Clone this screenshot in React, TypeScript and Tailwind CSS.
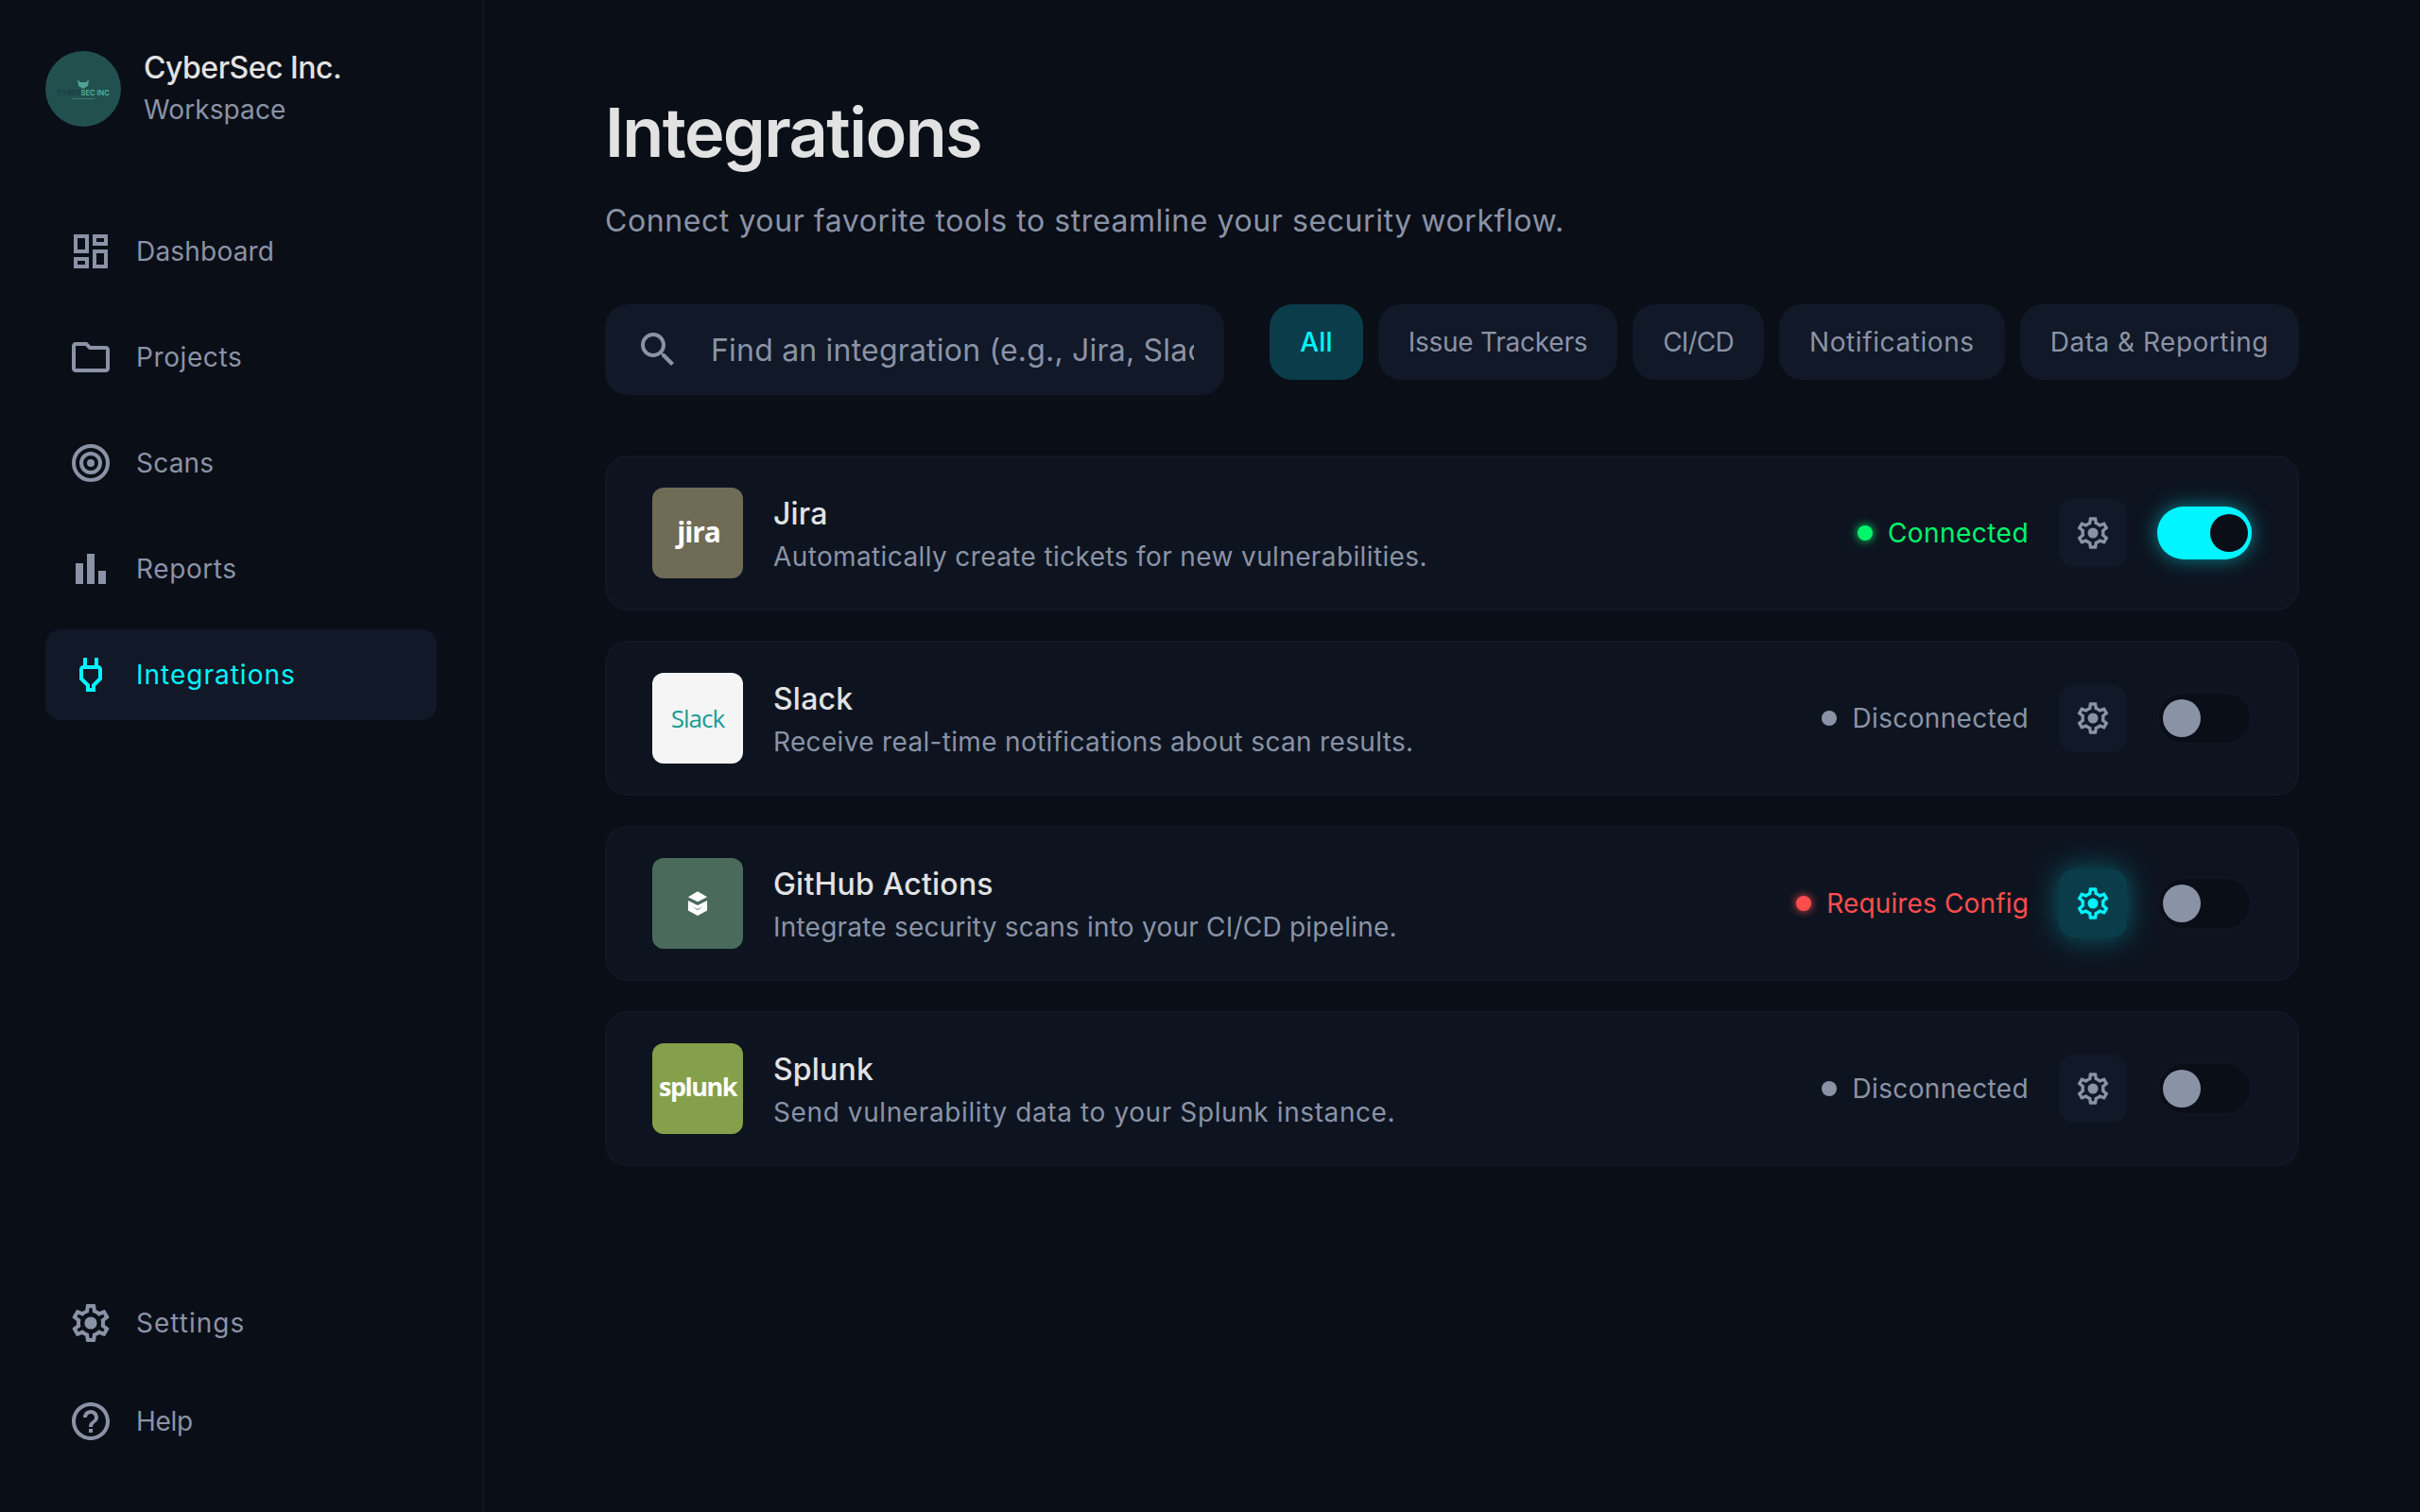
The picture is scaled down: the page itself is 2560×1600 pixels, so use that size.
import React from "react";

const gearOuter =
  "M19.43 12.98c.04-.32.07-.64.07-.98 0-.34-.03-.66-.07-.98l2.11-1.65c.19-.15.24-.42.12-.64l-2-3.46c-.09-.16-.26-.25-.44-.25-.06 0-.12.01-.17.03l-2.49 1c-.52-.4-1.08-.73-1.69-.98l-.38-2.65C14.46 2.18 14.25 2 14 2h-4c-.25 0-.46.18-.49.42l-.38 2.65c-.61.25-1.17.59-1.69.98l-2.49-1c-.06-.02-.12-.03-.18-.03-.17 0-.34.09-.43.25l-2 3.46c-.13.22-.07.49.12.64l2.11 1.65c-.04.32-.07.65-.07.98 0 .33.03.66.07.98l-2.11 1.65c-.19.15-.24.42-.12.64l2 3.46c.09.16.26.25.44.25.06 0 .12-.01.17-.03l2.49-1c.52.4 1.08.73 1.69.98l.38 2.65c.03.24.24.42.49.42h4c.25 0 .46-.18.49-.42l.38-2.65c.61-.25 1.17-.59 1.69-.98l2.49 1c.06.02.12.03.18.03.17 0 .34-.09.43-.25l2-3.46c.12-.22.07-.49-.12-.64l-2.11-1.65zm-1.98-1.71c.04.31.05.52.05.73 0 .21-.02.43-.05.73l-.14 1.13.89.7 1.08.84-.7 1.21-1.27-.51-1.04-.42-.9.68c-.43.32-.84.56-1.25.73l-1.06.43-.16 1.13-.2 1.35h-1.4l-.19-1.35-.16-1.13-1.06-.43c-.43-.18-.83-.41-1.23-.71l-.91-.7-1.06.43-1.27.51-.7-1.21 1.08-.84.89-.7-.14-1.13c-.03-.31-.05-.54-.05-.74s.02-.43.05-.73l.14-1.13-.89-.7-1.08-.84.7-1.21 1.27.51 1.04.42.9-.68c.43-.32.84-.56 1.25-.73l1.06-.43.16-1.13.2-1.35h1.39l.19 1.35.16 1.13 1.06.43c.43.18.83.41 1.23.71l.91.7 1.06-.43 1.27-.51.7 1.21-1.07.85-.89.7.14 1.13z";

function Icon({ d, size = 48, children }: { d?: string; size?: number; children?: React.ReactNode }) {
  return (
    <svg width={size} height={size} viewBox="0 0 24 24" fill="currentColor" className="shrink-0">
      {d && <path d={d} />}
      {children}
    </svg>
  );
}

function Gear({ size = 48 }: { size?: number }) {
  return (
    <Icon d={gearOuter} size={size}>
      <circle cx="12" cy="12" r="3.3" />
    </Icon>
  );
}

const navItems = [
  {
    label: "Dashboard",
    tracking: "tracking-[0.2px]",
    icon: <Icon d="M19 5v2h-4V5h4M9 5v6H5V5h4m10 8v6h-4v-6h4M9 17v2H5v-2h4M21 3h-8v6h8V3zM11 3H3v10h8V3zm10 8h-8v10h8V11zm-10 4H3v6h8v-6z" />,
  },
  {
    label: "Projects",
    tracking: "tracking-[0.6px]",
    icon: <Icon d="M9.17 6l2 2H20v10H4V6h5.17M10 4H4c-1.1 0-1.99.9-1.99 2L2 18c0 1.1.9 2 2 2h16c1.1 0 2-.9 2-2V8c0-1.1-.9-2-2-2h-8l-2-2z" />,
  },
  {
    label: "Scans",
    tracking: "tracking-[0.2px]",
    icon: (
      <Icon>
        <circle cx="12" cy="12" r="9" fill="none" stroke="currentColor" strokeWidth="2" />
        <circle cx="12" cy="12" r="5" fill="none" stroke="currentColor" strokeWidth="2" />
        <circle cx="12" cy="12" r="2" />
      </Icon>
    ),
  },
  { label: "Reports", tracking: "tracking-[0.6px]", icon: <Icon d="M4 9h4v11H4zM16 13h4v7h-4zM10 4h4v16h-4z" /> },
  {
    label: "Integrations",
    tracking: "tracking-[1px]",
    active: true,
    icon: <Icon d="M16.01 7 16 3h-2v4h-4V3H8v4h-.01C7 7 6 8 6 8.99v5.49L9.5 18v3h5v-3l3.5-3.51v-5.5c0-1-1-1.99-1.99-1.99zm-.01 6.66-3.5 3.51V19h-1v-1.83L8 13.65V9h8v4.66z" />,
  },
];

function NavItem({
  label,
  icon,
  active,
  tracking,
}: {
  label: string;
  icon: React.ReactNode;
  active?: boolean;
  tracking?: string;
}) {
  return (
    <a
      className={
        active
          ? "flex h-[96px] items-center gap-6 rounded-2xl bg-[#111827] px-6 text-[28px] text-[#00f5ff]"
          : "flex h-[96px] items-center gap-6 rounded-2xl px-6 text-[28px] text-[#8a93a6]"
      }
    >
      {icon}
      <span className={tracking}>{label}</span>
    </a>
  );
}

const filters = [
  { label: "All", tracking: "tracking-[0.2px]" },
  { label: "Issue Trackers", tracking: "tracking-[-0.25px]" },
  { label: "CI/CD", tracking: "tracking-[-0.8px]" },
  { label: "Notifications", tracking: "tracking-[0.6px]" },
  { label: "Data & Reporting", tracking: "tracking-[0.5px]" },
];

type Status = "connected" | "disconnected" | "config";

const integrations: {
  name: string;
  desc: string;
  descTracking: string;
  status: Status;
  on?: boolean;
  logo: React.ReactNode;
  logoBg: string;
}[] = [
  {
    name: "Jira",
    desc: "Automatically create tickets for new vulnerabilities.",
    descTracking: "tracking-[0.38px]",
    status: "connected",
    on: true,
    logoBg: "bg-[#6f6b55]",
    logo: <span className="mb-[3px] ml-[2px] font-['Open_Sans'] text-[30px] font-bold tracking-[-1.2px] text-white">jira</span>,
  },
  {
    name: "Slack",
    desc: "Receive real-time notifications about scan results.",
    descTracking: "tracking-[0.33px]",
    status: "disconnected",
    logoBg: "bg-[#f5f5f5]",
    logo: <span className="font-['Open_Sans'] text-[26px] font-medium tracking-[-1px] text-[#1a9c95]">Slack</span>,
  },
  {
    name: "GitHub Actions",
    desc: "Integrate security scans into your CI/CD pipeline.",
    descTracking: "tracking-[0.22px]",
    status: "config",
    logoBg: "bg-[#4a6b5c]",
    logo: (
      <svg width="22" height="28" viewBox="0 0 24 30" fill="#fff" className="mt-[2px]">
        <path d="M12 0 23 6.5 12 12 1 6.5z" />
        <path d="M1 10.5 12 16 23 10.5V22L12 28 1 22zM5.5 17.5 12 21.5 18.5 17.5 12 20.5z" fillRule="evenodd" />
      </svg>
    ),
  },
  {
    name: "Splunk",
    desc: "Send vulnerability data to your Splunk instance.",
    descTracking: "tracking-[0.6px]",
    status: "disconnected",
    logoBg: "bg-[#84a04a]",
    logo: <span className="mb-1 font-['Open_Sans'] text-[27px] font-bold tracking-[-1.5px] text-white">splunk</span>,
  },
];

const statusStyles: Record<Status, { label: string; text: string; dot: string }> = {
  connected: {
    label: "Connected",
    text: "text-[#00f56a] tracking-[0.45px]",
    dot: "bg-[#00f56a] shadow-[0_0_10px_#00f56a]",
  },
  disconnected: { label: "Disconnected", text: "text-[#8a93a6] tracking-[0.35px]", dot: "bg-[#8a93a6]" },
  config: {
    label: "Requires Config",
    text: "text-[#ff4d4d] tracking-[0.15px]",
    dot: "bg-[#ff4d4d] shadow-[0_0_10px_#ff4d4d]",
  },
};

function Toggle({ on }: { on?: boolean }) {
  return (
    <div
      className={
        on
          ? "flex h-[56px] w-[100px] items-center justify-end rounded-full bg-[#00f5ff] px-1 shadow-[0_0_20px_rgba(0,245,255,0.5)]"
          : "flex h-[56px] w-[100px] items-center rounded-full border-2 border-[#0f1622] bg-[#0a0e17] px-[4px]"
      }
    >
      <div className={on ? "h-10 w-10 rounded-full bg-[#0a0e17]" : "h-10 w-10 rounded-full bg-[#8a93a6]"} />
    </div>
  );
}

function IntegrationCard({ item }: { item: (typeof integrations)[number] }) {
  const st = statusStyles[item.status];
  const needsConfig = item.status === "config";
  return (
    <div className="flex h-[164px] items-center justify-between rounded-3xl border-2 border-[#101824] bg-[#0d1420] px-12">
      <div className="flex items-center gap-8">
        <div className={`flex h-24 w-24 items-center justify-center rounded-xl ${item.logoBg}`}>{item.logo}</div>
        <div className="pt-[3px]">
          <div className="text-[32px] font-medium leading-[44px] tracking-[0.2px] text-[#e2e2e2]">{item.name}</div>
          <div className={`mt-[3px] text-[28px] leading-[40px] text-[#8a93a6] ${item.descTracking}`}>{item.desc}</div>
        </div>
      </div>
      <div className="flex items-center gap-8">
        <div className="flex items-center gap-4">
          <span className={`h-4 w-4 rounded-full ${st.dot}`} />
          <span className={`text-[28px] ${st.text}`}>{st.label}</span>
        </div>
        <button
          className={
            needsConfig
              ? "flex h-[72px] w-[72px] items-center justify-center rounded-2xl bg-[#0b3c49] text-[#00f5ff] shadow-[0_0_30px_rgba(0,245,255,0.35)]"
              : "flex h-[72px] w-[72px] items-center justify-center rounded-2xl bg-[#111827] text-[#8a93a6]"
          }
        >
          <Gear size={40} />
        </button>
        <Toggle on={item.on} />
      </div>
    </div>
  );
}

export default function App() {
  return (
    <div className="flex h-[1600px] w-[2560px] overflow-hidden bg-[#0a0e17] font-['Inter',sans-serif]">
      <aside className="flex w-[512px] shrink-0 flex-col justify-between border-r-2 border-[#101722] p-12">
        <div>
          <div className="mb-[80px] mt-[2px] flex items-center gap-6">
            <div className="flex h-20 w-20 flex-col items-center justify-center rounded-full bg-[#22504f]">
              <svg width="12" height="10" viewBox="0 0 12 10" fill="#4fa394">
                <path d="M0 0 3 3 6 3 9 3 12 0 11 7 6 10 1 7z" />
              </svg>
              <span className="whitespace-nowrap text-[7.5px] font-semibold leading-[9px] text-[#4fb79f]">
                <span className="text-[#193c40]">CYBER</span>SEC INC
              </span>
              <span className="mt-px h-px w-[24px] bg-[#2f7c72]" />
            </div>
            <div>
              <div className="text-[32px] font-medium leading-[44px] tracking-[-0.5px] text-[#e2e2e2]">CyberSec Inc.</div>
              <div className="text-[28px] leading-[44px] tracking-[0.1px] text-[#8a93a6]">Workspace</div>
            </div>
          </div>
          <nav className="flex flex-col gap-4">
            {navItems.map((n) => (
              <NavItem key={n.label} label={n.label} icon={n.icon} active={n.active} tracking={n.tracking} />
            ))}
          </nav>
        </div>
        <div className="flex flex-col gap-2">
          <NavItem label="Settings" tracking="tracking-[1px]" icon={<Gear />} />
          <NavItem
            label="Help"
            tracking="tracking-[-0.3px]"
            icon={<Icon d="M11 18h2v-2h-2v2zm1-16C6.48 2 2 6.48 2 12s4.48 10 10 10 10-4.48 10-10S17.52 2 12 2zm0 18c-4.41 0-8-3.59-8-8s3.59-8 8-8 8 3.59 8 8-3.59 8-8 8zm0-14c-2.21 0-4 1.79-4 4h2c0-1.1.9-2 2-2s2 .9 2 2c0 2-3 1.75-3 5h2c0-2.25 3-2.5 3-5 0-2.21-1.79-4-4-4z" />}
          />
        </div>
      </aside>
      <main className="flex-1 px-32 pt-[98px]">
        <h1 className="text-[72px] font-semibold leading-[84px] tracking-[-1.6px] text-[#e2e2e2]">Integrations</h1>
        <p className="mt-[32px] text-[32px] leading-[40px] tracking-[0.58px] text-[#8a93a6]">
          Connect your favorite tools to streamline your security workflow.
        </p>
        <div className="mt-[68px] flex items-start gap-12">
          <div className="flex h-[96px] flex-1 items-center gap-8 rounded-3xl bg-[#111827] px-8 text-[#8a93a6]">
            <Icon d="M15.5 14h-.79l-.28-.27C15.41 12.59 16 11.11 16 9.5 16 5.91 13.09 3 9.5 3S3 5.91 3 9.5 5.91 16 9.5 16c1.61 0 3.09-.59 4.23-1.57l.27.28v.79l5 4.99L20.49 19l-4.99-5zm-6 0C7.01 14 5 11.99 5 9.5S7.01 5 9.5 5 14 7.01 14 9.5 11.99 14 9.5 14z" />
            <input
              placeholder="Find an integration (e.g., Jira, Slack...)"
              className="w-full min-w-0 bg-transparent pt-[2px] text-[32px] tracking-[0.2px] outline-none placeholder:text-[#8a93a6]"
            />
          </div>
          <div className="flex gap-4">
            {filters.map((f, i) => (
              <button
                key={f.label}
                className={
                  i === 0
                    ? `h-[80px] rounded-3xl bg-[#0b3c49] px-8 text-[28px] font-medium text-[#00f5ff] ${f.tracking}`
                    : `h-[80px] rounded-3xl bg-[#111827] px-8 text-[28px] text-[#8a93a6] ${f.tracking}`
                }
              >
                {f.label}
              </button>
            ))}
          </div>
        </div>
        <div className="mt-[64px] flex flex-col gap-8">
          {integrations.map((item) => (
            <IntegrationCard key={item.name} item={item} />
          ))}
        </div>
      </main>
    </div>
  );
}
